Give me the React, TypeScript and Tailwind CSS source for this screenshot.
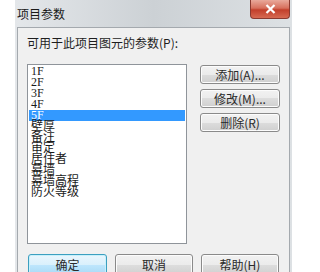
const items = ["1F", "2F", "3F", "4F", "5F", "壁厚", "备注", "审定", "居住者", "幕墙", "幕墙高程", "防火等级"];

function Btn({ label, wide, primary }: { label: string; wide?: boolean; primary?: boolean }) {
  return (
    <button
      className={
        (wide ? "w-[79px] " : "w-[78px] ") +
        (primary
          ? "border-[#3c9fc0] bg-[linear-gradient(#eaf6fd,#d9f0fc_50%,#bee6fd_50%,#a7d9f5)] shadow-[inset_0_0_0_1px_#c8f0fb] "
          : "border-[#8a8a8a] bg-[linear-gradient(#f2f2f2,#ebebeb_50%,#dddddd_50%,#cfcfcf)] shadow-[inset_0_0_0_1px_#fcfcfc] ") +
        "h-[22px] shrink-0 rounded-[3px] border text-[12px] leading-[20px] text-[#2a2a2a]"
      }
    >
      {label}
    </button>
  );
}

function SideBtn({ label }: { label: string }) {
  return (
    <button className="h-[19px] w-[80px] rounded-[3px] border border-[#8a8a8a] bg-[linear-gradient(#f2f2f2,#ebebeb_50%,#dddddd_50%,#cfcfcf)] text-[12px] leading-[17px] text-[#2a2a2a] shadow-[inset_0_0_0_1px_#fcfcfc]">
      {label}
    </button>
  );
}

export default function App() {
  return (
    <div className="h-[272px] w-[320px] overflow-hidden bg-white font-['Noto_Sans_CJK_SC',sans-serif] text-[12px] text-[#1e1e1e]">
      <div className="ml-[15px] w-[277px] bg-linear-to-r from-[#e4e7ea] via-[#ccd1d5] to-[#dde1e4]">
        {/* title bar */}
        <div className="flex h-[27px] items-start justify-between pl-[2px] pr-[2px]">
          <span className="mt-[7px] text-[12px] leading-[14px] text-[#1a1a1a]">项目参数</span>
          <div className="flex h-[19px] w-[40px] items-center justify-center rounded-b-[4px] border border-t-0 border-[#8b3a30] bg-[linear-gradient(#e9a99b,#d7705d_45%,#c23f2b_55%,#d66a52)]">
            <svg width="11" height="10" viewBox="0 0 11 10">
              <path d="M1.5 1 L9.5 9 M9.5 1 L1.5 9" stroke="#fff" strokeWidth="2.2" />
            </svg>
          </div>
        </div>

        {/* client area */}
        <div className="mx-[2px] h-[260px] border border-b-0 border-[#a4a9ae] bg-[#f0f0f0] pl-[9px] pt-[8px]">
          <p className="leading-[14px] text-[#1e1e1e]">可用于此项目图元的参数(P):</p>

          <div className="mt-[14px] flex items-start">
            <ul className="h-[180px] w-[160px] border border-[#8f949a] bg-white p-[1px] font-['Liberation_Serif','Noto_Sans_CJK_SC',serif] text-[12px] leading-[11px]">
              {items.map((it, i) => (
                <li
                  key={it}
                  className={
                    "h-[11px] whitespace-nowrap pl-[2px] " +
                    (i === 4 ? "bg-[#3399ff] text-white" : "text-[#1a1a1a]")
                  }
                >
                  {it}
                </li>
              ))}
            </ul>

            <div className="ml-[13px] mt-[1px] flex flex-col gap-[5px]">
              <SideBtn label="添加(A)..." />
              <SideBtn label="修改(M)..." />
              <SideBtn label="删除(R)" />
            </div>
          </div>

          <div className="ml-[1px] mt-[10px] flex gap-[8px]">
            <Btn label="确定" wide primary />
            <Btn label="取消" />
            <Btn label="帮助(H)" />
          </div>
        </div>
      </div>
    </div>
  );
}
